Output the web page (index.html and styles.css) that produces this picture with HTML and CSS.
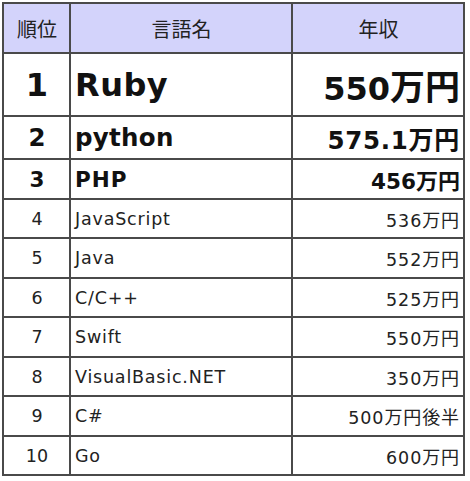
FILE: index.html
```html
<!DOCTYPE html>
<html lang="ja">
<head>
<meta charset="utf-8">
<link rel="stylesheet" href="styles.css">
</head>
<body>
<table class="ranking">
  <colgroup>
    <col class="c-rank">
    <col class="c-lang">
    <col class="c-pay">
  </colgroup>
  <thead>
    <tr class="head">
      <th>順位</th>
      <th>言語名</th>
      <th>年収</th>
    </tr>
  </thead>
  <tbody>
    <tr class="r1"><td class="rank">1</td><td class="lang">Ruby</td><td class="pay">550<span class="jp">万円</span></td></tr>
    <tr class="r2"><td class="rank">2</td><td class="lang">python</td><td class="pay">575.1<span class="jp">万円</span></td></tr>
    <tr class="r3"><td class="rank">3</td><td class="lang">PHP</td><td class="pay">456<span class="jp">万円</span></td></tr>
    <tr class="rn h39"><td class="rank">4</td><td class="lang">JavaScript</td><td class="pay">536<span class="jp">万円</span></td></tr>
    <tr class="rn h40"><td class="rank">5</td><td class="lang">Java</td><td class="pay">552<span class="jp">万円</span></td></tr>
    <tr class="rn h39"><td class="rank">6</td><td class="lang">C/C++</td><td class="pay">525<span class="jp">万円</span></td></tr>
    <tr class="rn h40"><td class="rank">7</td><td class="lang">Swift</td><td class="pay">550<span class="jp">万円</span></td></tr>
    <tr class="rn h39"><td class="rank">8</td><td class="lang">VisualBasic.NET</td><td class="pay">350<span class="jp">万円</span></td></tr>
    <tr class="rn h40"><td class="rank">9</td><td class="lang">C#</td><td class="pay">500<span class="jp">万円後半</span></td></tr>
    <tr class="rn h39"><td class="rank">10</td><td class="lang">Go</td><td class="pay">600<span class="jp">万円</span></td></tr>
  </tbody>
</table>
</body>
</html>
```
FILE: styles.css
```css
html, body {
  margin: 0;
  padding: 0;
  background: #ffffff;
}
body {
  padding: 2px 0 0 2px;
  font-family: "DejaVu Sans", "Noto Sans CJK JP", sans-serif;
  color: #111;
}
.ranking {
  border-collapse: collapse;
  width: 463px;
  table-layout: fixed;
}
.c-rank { width: 67px; }
.c-lang { width: 222px; }
.c-pay { width: 172px; }
.ranking th,
.ranking td {
  border: 2px solid #4a4a4a;
  padding: 0 3px 0 4px;
  vertical-align: middle;
  white-space: nowrap;
}
.head { height: 50px; }
.head th {
  background: #d3d3fb;
  font-family: "Noto Sans CJK JP", sans-serif;
  font-weight: 400;
  font-size: 20px;
  text-align: center;
  color: #222;
}
.rank { text-align: center; }
.lang { text-align: left; }
.pay { text-align: right; }
.jp { font-family: "Noto Sans CJK JP", sans-serif; }

.r1 { height: 63px; }
.r1 td { font-weight: 700; font-size: 32px; }
.r1 .lang { letter-spacing: 0.5px; }
.r1 .jp { font-size: 35px; }
.r2 { height: 43px; }
.r2 td { font-weight: 700; font-size: 24.5px; }
.r2 .lang { letter-spacing: 0.3px; }
.r2 .pay { letter-spacing: 0.7px; }
.r2 .jp { font-size: 25px; }
.r3 { height: 40px; }
.r3 td { font-weight: 700; font-size: 21.5px; }
.r3 .lang { letter-spacing: 1px; }
.r3 .jp { font-size: 22px; }
.rn td { font-size: 17.5px; font-weight: 400; color: #222; }
.rn .lang { letter-spacing: 0.8px; }
.rn .pay { letter-spacing: 0.9px; }
.rn .jp { font-size: 18px; }
.h39 { height: 39px; }
.h40 { height: 40px; }
```
